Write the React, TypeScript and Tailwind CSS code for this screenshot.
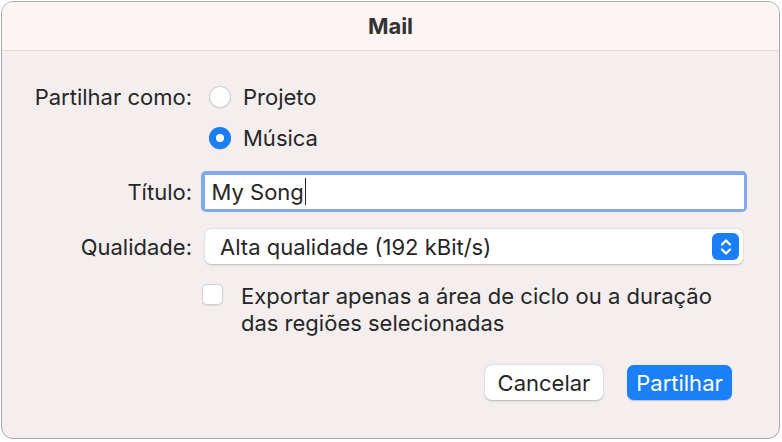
import React from 'react'

function Radio({ checked }: { checked?: boolean }) {
  if (checked) {
    return (
      <span className="flex h-[22px] w-[22px] items-center justify-center rounded-full bg-[#1a7ef7] shadow-[0_0.5px_1px_rgba(0,0,0,0.25)]">
        <span className="h-[8px] w-[8px] rounded-full bg-white" />
      </span>
    )
  }
  return (
    <span className="block h-[22px] w-[22px] rounded-full border border-[#d2cfcf] bg-white shadow-[0_0.5px_1px_rgba(0,0,0,0.12)]" />
  )
}

function Stepper() {
  return (
    <span className="flex h-[27px] w-[27px] items-center justify-center rounded-[6px] bg-[#1a7ef7]">
      <svg width="14" height="20" viewBox="0 0 14 20" fill="none" stroke="white" strokeWidth="2.2" strokeLinecap="round" strokeLinejoin="round">
        <path d="M3 7.5 L7 3.5 L11 7.5" />
        <path d="M3 12.5 L7 16.5 L11 12.5" />
      </svg>
    </span>
  )
}

export default function App() {
  return (
    <div className="min-h-screen bg-white pl-px pt-px font-['Inter',sans-serif] text-[22px] text-[#262626]">
      <div className="flex h-[438px] w-[779px] flex-col overflow-hidden rounded-[12px] border border-[#a9a9a9] bg-[#f4eeee]">
        <div className="flex h-[49px] shrink-0 items-center justify-center border-b border-[#dedada] bg-[#fdf4f4]">
          <span className="text-[22px] font-bold text-[#333]">Mail</span>
        </div>

        <div className="flex flex-col leading-[26px]">
          <div className="mt-[33px] flex h-[26px] items-center">
            <span className="w-[190px] text-right">Partilhar como:</span>
            <div className="ml-[17px] flex items-center gap-[12px]">
              <Radio />
              <span>Projeto</span>
            </div>
          </div>
          <div className="mt-[15px] flex h-[26px] items-center">
            <div className="ml-[207px] flex items-center gap-[12px]">
              <Radio checked />
              <span>Música</span>
            </div>
          </div>

          <div className="mt-[20px] flex h-[41px] items-center">
            <span className="w-[190px] text-right">Título:</span>
            <div className="ml-[9px] flex h-[41px] w-[546px] items-center rounded-[5px] bg-[#80a9f0] p-[3.5px]">
              <div className="flex h-full w-full items-center bg-white pl-[7px]">
                <span>My Song</span>
                <span className="ml-px h-[27px] w-[1.5px] bg-[#222]" />
              </div>
            </div>
          </div>

          <div className="mt-[17px] flex h-[35px] items-center">
            <span className="w-[190px] text-right">Qualidade:</span>
            <div className="ml-[13px] flex h-[35px] w-[538px] items-center justify-between rounded-[6px] bg-white pl-[15px] pr-[4px] shadow-[0_0.5px_2px_rgba(0,0,0,0.22)]">
              <span>Alta qualidade (192 kBit/s)</span>
              <Stepper />
            </div>
          </div>

          <div className="mt-[19px] ml-[200px] flex items-start gap-[18px]">
            <span className="mt-[1px] block h-[21px] w-[21px] shrink-0 rounded-[5px] border border-[#d6d2d2] bg-white shadow-[0_0.5px_1px_rgba(0,0,0,0.1)]" />
            <span className="leading-[27px]">
              Exportar apenas a área de ciclo ou a duração
              <br />
              das regiões selecionadas
            </span>
          </div>

          <div className="mt-[28px] flex justify-end gap-[24px] pr-[47px]">
            <button className="h-[35px] w-[118px] rounded-[7px] bg-white text-[22px] text-[#262626] shadow-[0_0.5px_2px_rgba(0,0,0,0.25)]">
              Cancelar
            </button>
            <button className="h-[35px] w-[105px] rounded-[7px] bg-[#1b7ff8] text-[22px] text-white shadow-[0_0.5px_1px_rgba(0,0,0,0.2)]">
              Partilhar
            </button>
          </div>
        </div>
      </div>
    </div>
  )
}
